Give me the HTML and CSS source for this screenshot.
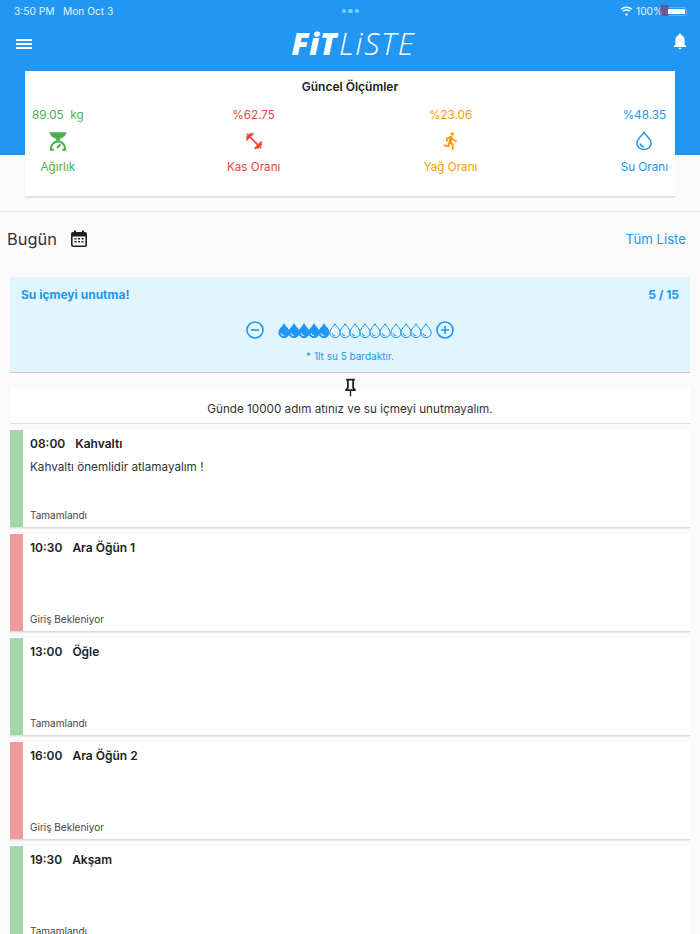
FILE: index.html
```html
<!DOCTYPE html>
<html lang="en">
<head>
    <meta charset="UTF-8">
    <meta name="viewport" content="width=device-width, initial-scale=1.0">
    <title>FitListe</title>
    <link rel="stylesheet" href="styles.css">
</head>
<body>
    <svg class="defs" width="0" height="0">
        <symbol id="drop" viewBox="0 0 12 15">
            <path class="drop-shape" d="M6 .8C5 3.200.8 6 .8 9.600a5.200 5 0 0 0 10.400 0C11.200 6 7 3.200 6 .8Z"/>
            <path class="drop-arc" d="M3 10.200a3.200 3 0 0 0 3.200 2.600"/>
        </symbol>
    </svg>

    <header class="hero">
        <div class="status-bar">
            <span class="status-time">3:50 PM &nbsp; Mon Oct 3</span>
            <span class="status-dots"><i></i><i></i><i></i></span>
            <span class="status-right">
                <svg class="wifi" viewBox="0 0 16 12"><path d="M8 2.200c2.300 0 4.400.9 6 2.400l1.200-1.300A10.500 10.500 0 0 0 8 .4 10.500 10.500 0 0 0 .8 3.300L2 4.600a8.700 8.700 0 0 1 6-2.400Zm0 3.500c1.300 0 2.500.5 3.500 1.300l1.200-1.300A7 7 0 0 0 8 3.900a7 7 0 0 0-4.700 1.800L4.500 7c1-.8 2.200-1.300 3.500-1.300Zm0 3.400c-.8 0-1.400.3-2 .7l2 2.200 2-2.200c-.6-.4-1.200-.7-2-.7Z"/></svg>
                <span>100%</span>
                <span class="battery"><i></i></span>
            </span>
        </div>
        <div class="toolbar">
            <span class="menu-icon"><i></i><i></i><i></i></span>
            <div class="logo"><b>FiT</b><span>LiSTE</span></div>
            <svg class="bell" viewBox="4 2 16 22"><path d="M12 23c1.100 0 2-.9 2-2h-4c0 1.100.89 2 2 2zm6-6v-6c0-3.070-1.640-5.640-4.500-6.320V4c0-.83-.67-1.500-1.500-1.500s-1.500.67-1.500 1.500v.68C7.630 5.360 6 7.920 6 11v6l-2 2v1h16v-1l-2-2z"/></svg>
        </div>
        <section class="summary">
            <h2 class="summary-title">Güncel Ölçümler</h2>
            <div class="stats">
                <div class="stat stat-green">
                    <span class="stat-value">89.05 &nbsp;kg</span>
                    <svg class="stat-icon" viewBox="0 0 24 24">
                        <path d="M1.500 1.500h21l-1.500 3c-1.200 2.500-4 4-6.500 4.500v2.500h-5V9C7 8.500 4.200 7 3 4.500Z"/>
                        <path class="scale-line" d="M3.500 22.500c-.3-5.500 3.500-10 8.500-10s8.800 4.500 8.500 10M2 22.500h5M17 22.500h5"/>
                        <path class="scale-line" d="M11 20.500l4-4.500"/>
                    </svg>
                    <span class="stat-label">Ağırlık</span>
                </div>
                <div class="stat stat-red">
                    <span class="stat-value">%62.75</span>
                    <svg class="stat-icon" viewBox="0 0 24 24"><path d="M20.570 14.860L22 13.430 20.570 12 17 15.570 8.430 7 12 3.430 10.570 2 9.140 3.430 7.710 2 5.570 4.140 4.140 2.710 2.710 4.140l1.430 1.430L2 7.710l1.430 1.430L2 10.570 3.430 12 7 8.430 15.570 17 12 20.570 13.430 22l1.430-1.430L16.290 22l2.140-2.140 1.430 1.430 1.430-1.430-1.430-1.430L22 16.290z"/></svg>
                    <span class="stat-label">Kas Oranı</span>
                </div>
                <div class="stat stat-orange">
                    <span class="stat-value">%23.06</span>
                    <svg class="stat-icon" viewBox="0 0 24 24"><path d="M13.490 5.480c1.100 0 2-.9 2-2s-.9-2-2-2-2 .9-2 2 .9 2 2 2zm-3.600 13.900l1-4.400 2.100 2v6h2v-7.500l-2.100-2 .6-3c1.300 1.500 3.300 2.500 5.500 2.500v-2c-1.900 0-3.500-1-4.300-2.400l-1-1.600c-.4-.6-1-1-1.700-1-.3 0-.5.1-.8.1l-5.200 2.200v4.700h2v-3.400l1.800-.7-1.600 8.100-4.900-1-.4 2 7 1.400z"/></svg>
                    <span class="stat-label">Yağ Oranı</span>
                </div>
                <div class="stat stat-blue">
                    <span class="stat-value">%48.35</span>
                    <svg class="stat-icon stat-icon-line" viewBox="0 0 24 24"><path d="M12 1.500C10 5.500 3.500 9.500 3.500 14.500a8.500 7.800 0 0 0 17 0C20.500 9.500 14 5.500 12 1.500Z"/><path d="M7.500 15a4.800 4.500 0 0 0 4.500 4"/></svg>
                    <span class="stat-label">Su Oranı</span>
                </div>
            </div>
        </section>
    </header>

    <main>
        <div class="today-row">
            <div class="today-left">
                <span class="today-title">Bugün</span>
                <svg class="calendar" viewBox="0 0 16 17">
                    <path d="M2 2h1V.5h2V2h6V.5h2V2h1a2 2 0 0 1 2 2v11a2 2 0 0 1-2 2H2a2 2 0 0 1-2-2V4a2 2 0 0 1 2-2Zm-.4 4.500V15c0 .2.2.4.4.4h12c.2 0 .4-.2.4-.4V6.500Z"/>
                    <path d="M3.500 8h2v1.500h-2Zm3.500 0h2v1.500H7Zm3.500 0h2v1.500h-2Zm-7 3h2v1.500h-2ZM7 11h2v1.500H7Zm3.500 0h2v1.500h-2Z"/>
                </svg>
            </div>
            <span class="today-link">Tüm Liste</span>
        </div>

        <section class="water">
            <div class="water-head">
                <span>Su içmeyi unutma!</span>
                <span>5 / 15</span>
            </div>
            <div class="water-controls">
                <svg class="round-btn" viewBox="0 0 18 18"><circle cx="9" cy="9" r="8"/><path d="M5 9h8"/></svg>
                <div class="drops">
                    <svg class="drop full"><use href="#drop"/></svg>
                    <svg class="drop full"><use href="#drop"/></svg>
                    <svg class="drop full"><use href="#drop"/></svg>
                    <svg class="drop full"><use href="#drop"/></svg>
                    <svg class="drop full"><use href="#drop"/></svg>
                    <svg class="drop"><use href="#drop"/></svg>
                    <svg class="drop"><use href="#drop"/></svg>
                    <svg class="drop"><use href="#drop"/></svg>
                    <svg class="drop"><use href="#drop"/></svg>
                    <svg class="drop"><use href="#drop"/></svg>
                    <svg class="drop"><use href="#drop"/></svg>
                    <svg class="drop"><use href="#drop"/></svg>
                    <svg class="drop"><use href="#drop"/></svg>
                    <svg class="drop"><use href="#drop"/></svg>
                    <svg class="drop"><use href="#drop"/></svg>
                </div>
                <svg class="round-btn" viewBox="0 0 18 18"><circle cx="9" cy="9" r="8"/><path d="M5 9h8M9 5v8"/></svg>
            </div>
            <p class="water-note">* 1lt su 5 bardaktır.</p>
        </section>

        <section class="notice">
            <div class="notice-pin">
                <svg class="pin" viewBox="0 0 24 24"><path d="M16,12V4H17V2H7V4H8V12L6,14V16H11.200V22H12.800V16H18V14L16,12M8.800,14L10,12.800V4H14V12.800L15.200,14H8.800Z"/></svg>
            </div>
            <p class="notice-text">Günde 10000 adım atınız ve su içmeyi unutmayalım.</p>
        </section>

        <article class="meal meal-done">
            <h3 class="meal-title"><span>08:00</span><span>Kahvaltı</span></h3>
            <p class="meal-desc">Kahvaltı önemlidir atlamayalım !</p>
            <span class="meal-status">Tamamlandı</span>
        </article>
        <article class="meal meal-wait">
            <h3 class="meal-title"><span>10:30</span><span>Ara Öğün 1</span></h3>
            <span class="meal-status">Giriş Bekleniyor</span>
        </article>
        <article class="meal meal-done">
            <h3 class="meal-title"><span>13:00</span><span>Öğle</span></h3>
            <span class="meal-status">Tamamlandı</span>
        </article>
        <article class="meal meal-wait">
            <h3 class="meal-title"><span>16:00</span><span>Ara Öğün 2</span></h3>
            <span class="meal-status">Giriş Bekleniyor</span>
        </article>
        <article class="meal meal-done">
            <h3 class="meal-title"><span>19:30</span><span>Akşam</span></h3>
            <span class="meal-status">Tamamlandı</span>
        </article>
    </main>
</body>
</html>
```

FILE: styles.css
```css
html, body {
    margin: 0;
    padding: 0;
    height: 934px;
    overflow: hidden;
}

body {
    font-family: Inter, 'Noto Sans', sans-serif;
    background-color: #fafafa;
    color: #212121;
}

.defs {
    display: block;
    height: 0;
}

.hero {
    display: flow-root;
    background-color: #2196f3;
    color: #fff;
}

.status-bar {
    height: 22px;
    padding: 0 14px;
    display: flex;
    align-items: center;
    justify-content: space-between;
    font-size: 10.200px;
    color: #e3f2fd;
}

.status-time {
    width: 120px;
}

.status-dots {
    display: flex;
    gap: 2px;
}

.status-dots i {
    width: 4.500px;
    height: 4.500px;
    border-radius: 50%;
    background-color: #7fd4ff;
}

.status-right {
    width: 120px;
    display: flex;
    justify-content: flex-end;
    align-items: center;
    gap: 3px;
    margin-right: -1px;
}

.wifi {
    width: 13px;
    height: 10px;
    fill: #fff;
}

.battery {
    position: relative;
    width: 21px;
    height: 9px;
    padding: 1px;
    box-sizing: border-box;
    border: 1px solid #7aa9d8;
    border-radius: 3px;
    display: flex;
}

/* dark smear behind the percent sign in the status bar */
.battery::before {
    content: "";
    position: absolute;
    left: -7px;
    top: -3px;
    width: 9px;
    height: 11px;
    border-radius: 2px;
    background-color: #8a2b4f;
    opacity: 0.55;
}

.battery i {
    position: relative;
    flex: 1;
    background-color: #fff;
    border-radius: 1px;
}

.toolbar {
    height: 43px;
    padding: 0 13px 6px 16px;
    display: flex;
    align-items: center;
    justify-content: space-between;
}

.menu-icon {
    width: 16px;
    display: flex;
    flex-direction: column;
    gap: 2px;
}

.menu-icon i {
    height: 2px;
    background-color: #fff;
}

.logo {
    font-family: 'Open Sans', sans-serif;
    font-size: 30.500px;
    font-style: italic;
    line-height: 1;
    display: flex;
    margin-left: 2px;
}

.logo b {
    font-weight: 800;
    letter-spacing: 0.500px;
}

.logo span {
    font-weight: 300;
    margin-left: 2px;
    letter-spacing: 1.700px;
}

.bell {
    width: 14px;
    height: 17px;
    fill: #fff;
    margin-bottom: 4px;
}

.summary {
    margin: 0 25px -42px;
    height: 126px;
    box-sizing: border-box;
    padding: 0 7px;
    background-color: #fff;
    border-bottom: 1px solid #ddd;
    box-shadow: 0 1px 1px rgba(0, 0, 0, 0.08);
    color: #212121;
}

.summary-title {
    margin: 0;
    padding-top: 8px;
    height: 28px;
    font-size: 12px;
    font-weight: 600;
    line-height: 15px;
    text-align: center;
}

.stats {
    display: flex;
    justify-content: space-between;
}

.stat {
    display: flex;
    flex-direction: column;
    align-items: center;
    font-size: 11.700px;
    line-height: 16px;
}

.stat-value {
    white-space: nowrap;
}

.stat-icon {
    width: 20px;
    height: 20px;
    margin: 8px 0 8px;
    fill: currentColor;
}

.stat-icon-line {
    fill: none;
    stroke: currentColor;
    stroke-width: 1.800;
}

.scale-line {
    fill: none;
    stroke: currentColor;
    stroke-width: 2.600;
}

.stat-green {
    color: #4caf50;
}

.stat-red {
    color: #f44336;
}

.stat-orange {
    color: #ff9800;
}

.stat-blue {
    color: #2196f3;
}

.today-row {
    margin-top: 56px;
    border-top: 1px solid #e8e8e8;
    height: 53px;
    padding: 0 14px 0 7px;
    display: flex;
    align-items: center;
    justify-content: space-between;
}

.today-left {
    display: flex;
    align-items: center;
    gap: 14px;
}

.today-title {
    font-size: 16.400px;
    color: #333;
}

.calendar {
    width: 16px;
    height: 17px;
    fill: #212121;
}

.today-link {
    font-size: 13.200px;
    color: #2196f3;
}

main {
    display: block;
}

.water {
    margin: 12px 10px 0;
    height: 96px;
    box-sizing: border-box;
    padding: 10px 11px 0;
    background-color: #e1f5fe;
    border-bottom: 1px solid #ccc;
    color: #2196f3;
}

.water-head {
    display: flex;
    justify-content: space-between;
    font-size: 12px;
    font-weight: 700;
    line-height: 15px;
}

.water-controls {
    margin-top: 19px;
    display: flex;
    align-items: center;
    justify-content: center;
}

.round-btn {
    width: 18px;
    height: 18px;
    overflow: visible;
    fill: none;
    stroke: #2196f3;
    stroke-width: 1.600;
}

.drops {
    display: flex;
    margin: 0 6px 0 14px;
}

.drop {
    --arc: #2196f3;
    width: 12px;
    height: 15px;
    margin-right: -1.850px;
    overflow: visible;
    fill: none;
    stroke: #2196f3;
    stroke-width: 1;
}

.drop.full {
    --arc: #e1f5fe;
    fill: #2196f3;
}

.drop-arc {
    fill: none;
    stroke: var(--arc);
}

.water-note {
    margin: 11px 0 0;
    font-size: 10px;
    line-height: 13px;
    text-align: center;
}

.notice {
    margin: 0 10px 6px;
    border-bottom: 1px solid #ddd;
}

.notice-pin {
    height: 15px;
    display: flex;
    justify-content: center;
}

.pin {
    width: 21px;
    height: 21px;
    margin-top: 4px;
    fill: #212121;
}

.notice-text {
    margin: 0;
    padding: 14px 0 6px;
    background-color: #fff;
    font-size: 11.700px;
    line-height: 15px;
    text-align: center;
    color: #333;
}

.meal {
    margin: 0 10px 7px;
    height: 97px;
    box-sizing: border-box;
    padding: 6px 12px 0 7px;
    background-color: #fff;
    border-left: 13px solid #a5d6a7;
    box-shadow: 0 1.500px 0 #dcdcdc;
    display: flex;
    flex-direction: column;
}

.meal-wait {
    border-left-color: #ef9a9a;
}

.meal-title {
    margin: 0;
    display: flex;
    gap: 10px;
    font-size: 12px;
    font-weight: 600;
    line-height: 16px;
}

.meal-desc {
    margin: 7px 0 0;
    font-size: 11.700px;
    line-height: 16px;
    color: #333;
}

.meal-status {
    margin-top: auto;
    padding-bottom: 5px;
    font-size: 10px;
    line-height: 13px;
    color: #444;
}
```
